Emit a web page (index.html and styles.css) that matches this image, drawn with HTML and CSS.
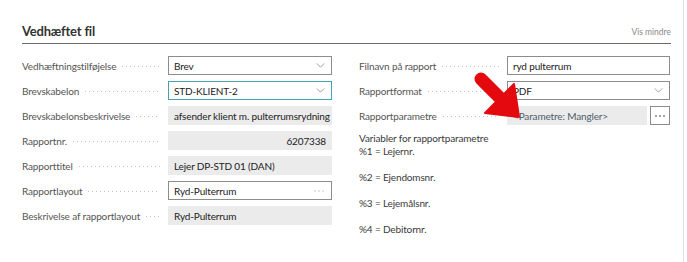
FILE: index.html
```html
<!DOCTYPE html>
<html lang="da">
<head>
    <meta charset="UTF-8">
    <title>Vedhæftet fil</title>
    <link rel="stylesheet" href="styles.css">
</head>
<body>
<div class="page">
    <section class="group">
        <div class="group-head">
            <h2>Vedhæftet fil</h2>
            <a class="toggle">Vis mindre</a>
        </div>

        <div class="cols">
            <div class="col">
                <div class="row">
                    <span class="label">Vedhæftningstilføjelse<i></i></span>
                    <div class="field select"><span>Brev</span>
                        <svg class="chev" viewBox="0 0 10 6"><polyline points="0.5,0.5 5,5 9.5,0.5"/></svg>
                    </div>
                </div>
                <div class="row">
                    <span class="label">Brevskabelon<i></i></span>
                    <div class="field select focus"><span>STD-KLIENT-2</span>
                        <svg class="chev" viewBox="0 0 10 6"><polyline points="0.5,0.5 5,5 9.5,0.5"/></svg>
                    </div>
                </div>
                <div class="row">
                    <span class="label">Brevskabelonsbeskrivelse<i></i></span>
                    <div class="field ro"><span>afsender klient m. pulterrumsrydning</span></div>
                </div>
                <div class="row">
                    <span class="label">Rapportnr.<i></i></span>
                    <div class="field ro num"><span>6207338</span></div>
                </div>
                <div class="row">
                    <span class="label">Rapporttitel<i></i></span>
                    <div class="field ro"><span>Lejer DP-STD 01 (DAN)</span></div>
                </div>
                <div class="row">
                    <span class="label">Rapportlayout<i></i></span>
                    <div class="field select"><span>Ryd-Pulterrum</span>
                        <svg class="ell light" viewBox="0 0 10 2"><circle cx="1" cy="1" r="0.7"/><circle cx="5" cy="1" r="0.7"/><circle cx="9" cy="1" r="0.7"/></svg>
                    </div>
                </div>
                <div class="row">
                    <span class="label">Beskrivelse af rapportlayout<i></i></span>
                    <div class="field ro"><span>Ryd-Pulterrum</span></div>
                </div>
            </div>

            <div class="col right">
                <div class="row">
                    <span class="label">Filnavn på rapport<i></i></span>
                    <div class="field"><span>ryd pulterrum</span></div>
                </div>
                <div class="row">
                    <span class="label">Rapportformat<i></i></span>
                    <div class="field select"><span>PDF</span>
                        <svg class="chev" viewBox="0 0 10 6"><polyline points="0.5,0.5 5,5 9.5,0.5"/></svg>
                    </div>
                </div>
                <div class="row">
                    <span class="label">Rapportparametre<i></i></span>
                    <div class="field-pair">
                        <div class="field ro param"><span>&lt;Parametre: Mangler&gt;</span></div>
                        <button class="more">
                            <svg class="ell" viewBox="0 0 10 2"><circle cx="1" cy="1" r="0.8"/><circle cx="5" cy="1" r="0.8"/><circle cx="9" cy="1" r="0.8"/></svg>
                        </button>
                    </div>
                </div>
                <div class="notes">
                    <p class="first">Variabler for rapportparametre</p>
                    <p>%1 = Lejernr.</p>
                    <p>%2 = Ejendomsnr.</p>
                    <p>%3 = Lejemålsnr.</p>
                    <p>%4 = Debitornr.</p>
                </div>
            </div>
        </div>
    </section>

    <!-- red annotation arrow -->
    <svg class="arrow" width="60" height="60" viewBox="0 0 60 60">
        <line x1="12" y1="11" x2="32" y2="31" stroke="#e3090f" stroke-width="13" stroke-linecap="round"/>
        <polygon points="45,16 50,49 16,45" fill="#e3090f" stroke="#e3090f" stroke-width="2" stroke-linejoin="round"/>
    </svg>
</div>
</body>
</html>
```

FILE: styles.css
```css
body {
    margin: 0;
    background: #fff;
    font-family: Lato, "Open Sans", Arial, sans-serif;
    color: #212121;
}
.page {
    position: relative;
    width: 683px;
    height: 262px;
    border-right: 1px solid #e4e4e4;
}
.group {
    padding: 22px 12px 0 22px;
}
.group-head {
    display: flex;
    justify-content: space-between;
    align-items: flex-end;
    border-bottom: 1px solid #6b6b6b;
    padding-bottom: 3px;
}
.group-head h2 {
    margin: 0;
    font-size: 13px;
    font-weight: 700;
    letter-spacing: -0.2px;
    line-height: 18px;
    color: #333;
}
.toggle {
    font-size: 8.5px;
    color: #8a8a8a;
    line-height: 14px;
    padding-bottom: 1px;
}
.cols {
    display: grid;
    grid-template-columns: 310px 311px;
    column-gap: 27px;
    margin-top: 12px;
}
.row {
    display: grid;
    grid-template-columns: 146px 1fr;
    height: 19px;
    margin-bottom: 6px;
    font-size: 10px;
    letter-spacing: -0.15px;
}
.right .row {
    grid-template-columns: 148px 1fr;
}
.label {
    display: flex;
    align-items: center;
    color: #555;
    white-space: nowrap;
    padding-right: 8px;
}
.label i {
    flex: 1;
    height: 1px;
    margin: 2px 0 0 6px;
    background: linear-gradient(to right, #c4c4c4 1px, transparent 1px) repeat-x;
    background-size: 4px 1px;
}
.field {
    box-sizing: border-box;
    height: 19px;
    display: flex;
    align-items: center;
    justify-content: space-between;
    padding: 0 5px;
    border: 1px solid #8c8c8c;
    background: #fff;
    color: #222;
    white-space: nowrap;
    overflow: hidden;
}
.field.focus {
    border-color: #48a2ac;
}
.field.ro {
    border-color: #ebebeb;
    background: #ebebeb;
}
.field.num {
    justify-content: flex-end;
}
.chev {
    width: 9px;
    height: 5px;
    fill: none;
    stroke: #8d8d8d;
    stroke-width: 1;
    margin-right: 1px;
}
.ell {
    width: 10px;
    height: 2px;
    fill: #333;
}
.ell.light {
    fill: #b8b8b8;
    margin-right: 2px;
}
.field-pair {
    display: flex;
    gap: 3px;
}
.field.param {
    flex: 1;
    color: #4d5d6a;
}
.more {
    box-sizing: border-box;
    width: 20px;
    height: 19px;
    padding: 0;
    border: 1px solid #8c8c8c;
    background: #fff;
    display: flex;
    align-items: center;
    justify-content: center;
}
.notes {
    margin-top: 7px;
    font-size: 10px;
    letter-spacing: -0.15px;
    line-height: 13px;
    color: #3a3a3a;
}
.notes p {
    margin: 0 0 13px;
}
.notes p.first {
    margin: 0;
}
.arrow {
    position: absolute;
    left: 469px;
    top: 68px;
}
```
